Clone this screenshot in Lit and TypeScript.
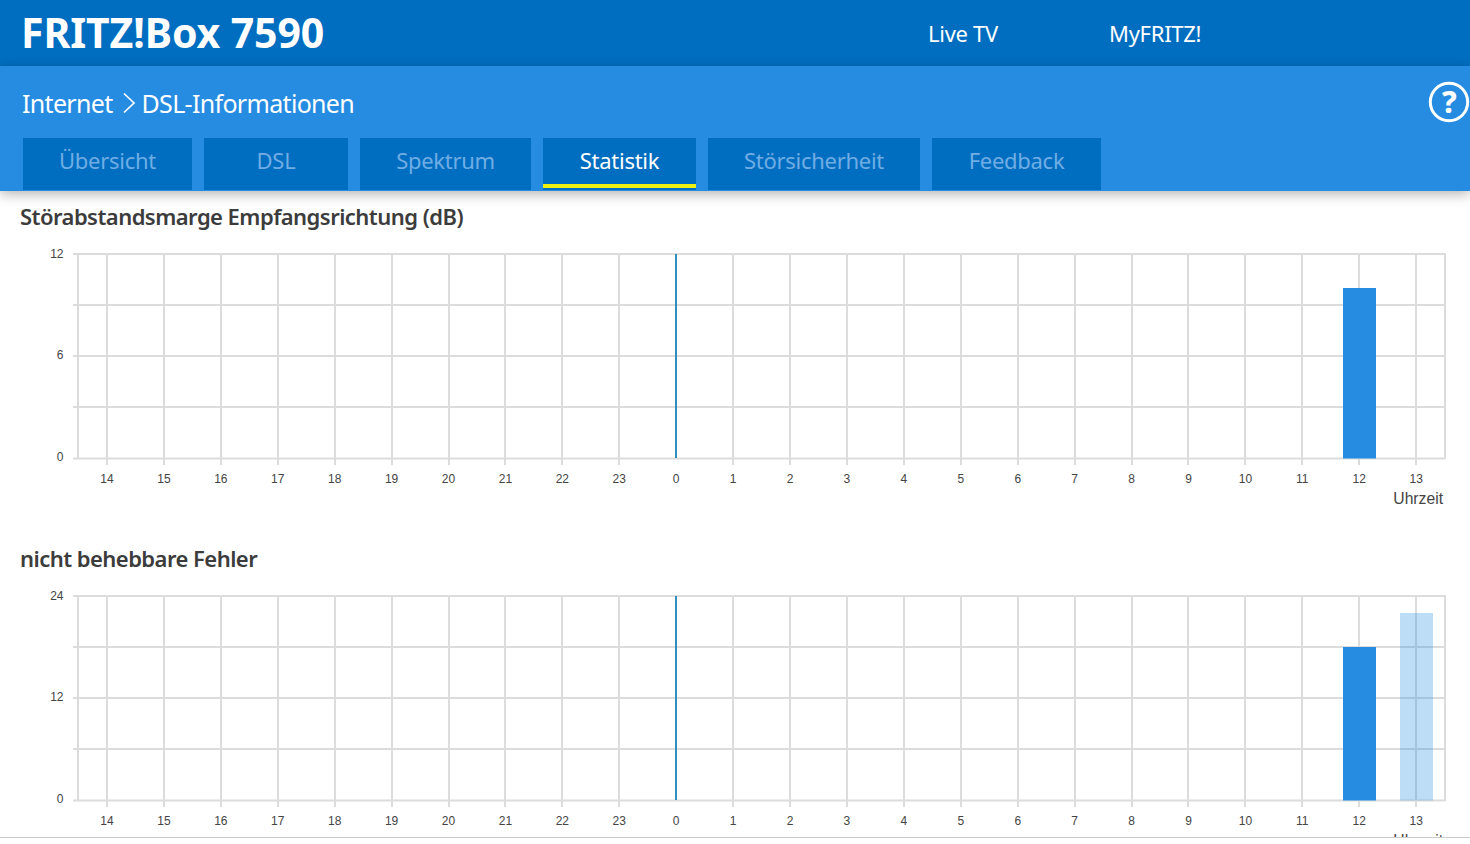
import { LitElement, html, css, svg } from "lit";
import { customElement, property } from "lit/decorators.js";

const HOURS = [14,15,16,17,18,19,20,21,22,23,0,1,2,3,4,5,6,7,8,9,10,11,12,13];
const xOf = (i: number) => 107 + i * 56.92;
const yLines = [1, 52, 103, 154, 205.5];

interface Bar { hour: number; top: number; light?: boolean }

@customElement("fb-chart")
class FbChart extends LitElement {
  @property() heading = "";
  @property({ type: Array }) labels: string[] = [];
  @property({ type: Array }) bars: Bar[] = [];
  static styles = css`
    :host { display: block; flex: none; }
    h2 {
      margin: 0 0 0 20px; font: 600 22px/30px "Noto Sans", sans-serif;
      letter-spacing: -0.54px; color: #3c3c3c;
    }
    svg { display: block; margin-top: 12px; }
    .grid { stroke: #dcdcdc; stroke-width: 2; fill: none; }
    .zero { stroke: #2f8dbf; stroke-width: 2; }
    .bar { fill: #268ce2; }
    .bar.light { opacity: .3; }
    text { font-family: "Liberation Sans", sans-serif; font-size: 12px; fill: #444; }
    .unit { font-size: 15.7px; }
  `;
  render() {
    return html`<h2>${this.heading}</h2>
      <svg width="1470" height="272" viewBox="0 -10 1470 272">
        ${yLines.map((y) => svg`<line class="grid" x1="73" x2="1445" y1=${y} y2=${y}></line>`)}
        <line class="grid" x1="78" x2="78" y1="0" y2="206"></line>
        <line class="grid" x1="1445" x2="1445" y1="0" y2="206"></line>
        ${HOURS.map((h, i) => svg`
          <line class=${h === 0 ? "zero" : "grid"} x1=${Math.round(xOf(i))} x2=${Math.round(xOf(i))} y1="1" y2=${h === 0 ? 205 : 212}></line>
          <text x=${xOf(i)} y="230" text-anchor="middle">${h}</text>`)}
        ${this.bars.map((b) => svg`<rect class="bar ${b.light ? "light" : ""}" x=${Math.round(xOf(HOURS.indexOf(b.hour))) - 17 + 1} y=${b.top} width="33" height=${205.5 - b.top}></rect>`)}
        ${this.labels.map((l, i) => svg`<text x="63.5" y=${i * 101.5 + 4.5} text-anchor="end">${l}</text>`)}
        <text class="unit" x="1443" y="251" text-anchor="end">Uhrzeit</text>
      </svg>`;
  }
}

@customElement("app-root")
class AppRoot extends LitElement {
  static styles = css`
    :host {
      display: flex; flex-direction: column; height: 844px; overflow: hidden;
      background: #fff; font-family: "Noto Sans", sans-serif;
    }
    .top {
      height: 66px; flex: none; background: #006ec0; color: #fff;
      display: flex; align-items: center; padding-left: 21px;
    }
    .logo { font-size: 41px; font-weight: 700; width: 907px; letter-spacing: -0.1px; line-height: 64px; padding-bottom: 2px; }
    .nav { font-size: 22px; letter-spacing: -0.28px; width: 181px; }
    .sub {
      flex: none; height: 125px; background: #268ce2; position: relative; z-index: 1;
      box-shadow: 0 3px 12px rgba(0,0,0,.3); display: flex; flex-direction: column;
    }
    .crumbs {
      height: 72px; flex: none; padding: 2px 0 0 22px; box-sizing: border-box; color: #fff; font-size: 25px;
      letter-spacing: -0.68px; display: flex; align-items: center;
    }
    .crumbs .chev { margin: 0 6px 0 9px; display: block; }
    .help { margin-left: auto; display: block; margin-top: -2px; }
    .help text { font: 800 30px "Noto Sans", sans-serif; fill: #fff; }
    .tabs { display: flex; gap: 12px; padding-left: 23px; }
    .tab {
      height: 52px; background: #006ec0; color: #70ade5; font-size: 22px; letter-spacing: -0.28px;
      display: flex; align-items: center; justify-content: center; box-sizing: border-box; padding-bottom: 8px;
    }
    .tab.active { color: #fff; position: relative; }
    .tab.active::after {
      content: ""; position: absolute; left: 0; right: 0; bottom: 2px; height: 4px; background: #eeee11;
    }
    main { flex: 1; min-height: 0; overflow: hidden; padding-top: 10px; display: flex; flex-direction: column; gap: 28px; }
    footer { flex: none; height: 6px; border-top: 1px solid #ccc; background: #fff; }
  `;
  render() {
    const tabs: [string, number][] = [["Übersicht",169],["DSL",144],["Spektrum",171],["Statistik",153],["Störsicherheit",212],["Feedback",169]];
    return html`
      <div class="top">
        <div class="logo">FRITZ!Box 7590</div>
        <div class="nav">Live TV</div>
        <div class="nav">MyFRITZ!</div>
      </div>
      <div class="sub">
        <div class="crumbs">
          <span>Internet</span>
          <svg class="chev" width="14" height="22" viewBox="0 0 14 22"><path d="M2 1.5 L12 11 L2 20.5" fill="none" stroke="#fff" stroke-width="1.7"/></svg>
          <span>DSL-Informationen</span>
          <svg class="help" width="42" height="42" viewBox="0 0 42 42">
            <circle cx="21" cy="21" r="18.7" fill="none" stroke="#fff" stroke-width="3"/>
            <text x="21" y="31.5" text-anchor="middle">?</text>
          </svg>
        </div>
        <div class="tabs">
          ${tabs.map(([t, w]) => html`<div class="tab ${t === "Statistik" ? "active" : ""}" style="width:${w}px">${t}</div>`)}
        </div>
      </div>
      <main>
        <fb-chart heading="Störabstandsmarge Empfangsrichtung (dB)" .labels=${["12","6","0"]} .bars=${[{hour:12,top:35}]}></fb-chart>
        <fb-chart heading="nicht behebbare Fehler" .labels=${["24","12","0"]} .bars=${[{hour:12,top:52},{hour:13,top:18,light:true}]}></fb-chart>
      </main>
      <footer></footer>
    `;
  }
}
